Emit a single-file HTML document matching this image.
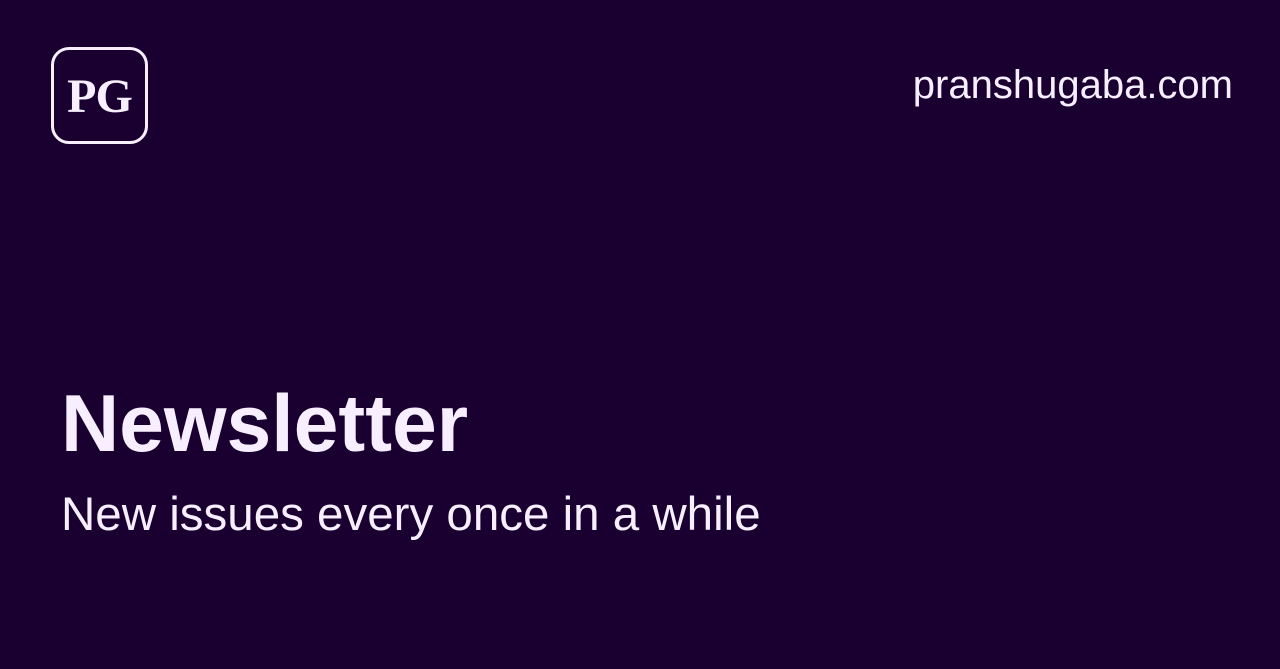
<!DOCTYPE html>
<html><head><meta charset="utf-8"><style>
html,body{margin:0;padding:0}
body{width:1280px;height:669px;background:#1a0030;position:relative;overflow:hidden;font-family:"Liberation Sans",sans-serif;color:#f7efff}
.logo{position:absolute;left:51px;top:47px;width:91px;height:91px;border:3px solid #f7efff;border-radius:18px;box-sizing:content-box}
.logo span{position:absolute;left:0;right:0;top:20px;text-align:center;font-family:"Liberation Serif",serif;font-weight:bold;font-size:48px;line-height:54px;letter-spacing:-1px}
.site{position:absolute;right:47px;top:62px;font-size:40px;line-height:46px}
h1{position:absolute;left:61px;top:379px;margin:0;font-size:80.5px;line-height:90px;font-weight:bold}
p{position:absolute;left:61px;top:487px;margin:0;font-size:47.5px;line-height:56px}
</style></head><body>
<div class="logo"><span>PG</span></div>
<div class="site">pranshugaba.com</div>
<h1>Newsletter</h1>
<p>New issues every once in a while</p>
</body></html>
